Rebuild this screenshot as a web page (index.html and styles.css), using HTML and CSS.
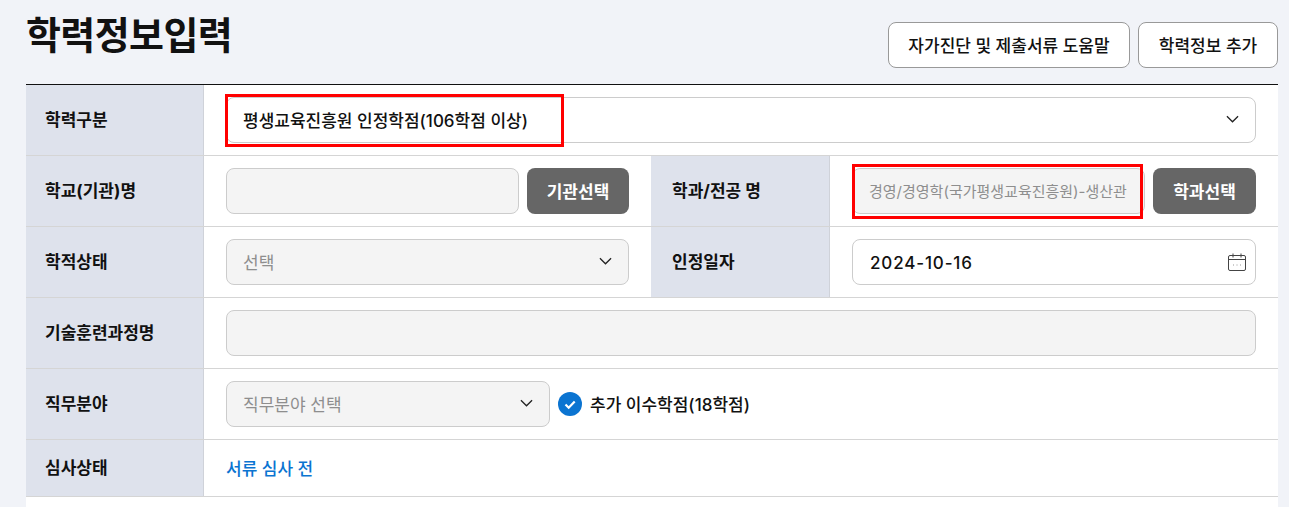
FILE: index.html
```html
<!DOCTYPE html>
<html lang="ko">
<head>
    <meta charset="UTF-8">
    <meta name="viewport" content="width=device-width, initial-scale=1.0">
    <title>학력정보입력</title>
    <link rel="stylesheet" href="styles.css">
</head>
<body>
<div class="container">
    <div class="top">
        <h1>학력정보입력</h1>
        <div class="top-buttons">
            <button class="btn-line help">자가진단 및 제출서류 도움말</button>
            <button class="btn-line add">학력정보 추가</button>
        </div>
    </div>

    <div class="form">
        <div class="row">
            <div class="label">학력구분</div>
            <div class="cell">
                <div class="field white grow mark-wrap">
                    <span class="value">평생교육진흥원 인정학점(106학점 이상)</span>
                    <svg class="chev" viewBox="0 0 14 8"><path d="M1 1l6 6 6-6"/></svg>
                    <span class="mark mark-a"></span>
                </div>
            </div>
        </div>

        <div class="row">
            <div class="label">학교(기관)명</div>
            <div class="cell half">
                <div class="field grey grow"></div>
                <button class="btn-dark school-btn">기관선택</button>
            </div>
            <div class="label label-r">학과/전공 명</div>
            <div class="cell half-r">
                <div class="field grey grow mark-wrap">
                    <span class="placeholder small">경영/경영학(국가평생교육진흥원)-생산관</span>
                    <span class="mark mark-b"></span>
                </div>
                <button class="btn-dark">학과선택</button>
            </div>
        </div>

        <div class="row">
            <div class="label">학적상태</div>
            <div class="cell half">
                <div class="field grey grow">
                    <span class="placeholder">선택</span>
                    <svg class="chev" viewBox="0 0 14 8"><path d="M1 1l6 6 6-6"/></svg>
                </div>
            </div>
            <div class="label label-r">인정일자</div>
            <div class="cell half-r">
                <div class="field white grow date-field">
                    <span class="value date">2024-10-16</span>
                    <svg class="cal" viewBox="0 0 18 18">
                        <rect x="0.5" y="2.5" width="17" height="15" rx="1.5"/>
                        <path d="M0.5 6.5h17M5 0.5v4M13 0.5v4"/>
                        <path class="cal-dots" d="M5 12h1M8.5 12h1M12 12h1"/>
                    </svg>
                </div>
            </div>
        </div>

        <div class="row">
            <div class="label">기술훈련과정명</div>
            <div class="cell">
                <div class="field grey grow"></div>
            </div>
        </div>

        <div class="row">
            <div class="label">직무분야</div>
            <div class="cell">
                <div class="field grey job">
                    <span class="placeholder">직무분야 선택</span>
                    <svg class="chev" viewBox="0 0 14 8"><path d="M1 1l6 6 6-6"/></svg>
                </div>
                <label class="check">
                    <svg class="check-icon" viewBox="0 0 24 24">
                        <circle cx="12" cy="12" r="12"/>
                        <path d="M7.5 12.5l3.2 3.2 6-6.2"/>
                    </svg>
                    추가 이수학점(18학점)
                </label>
            </div>
        </div>

        <div class="row last">
            <div class="label">심사상태</div>
            <div class="cell">
                <span class="status">서류 심사 전</span>
            </div>
        </div>
    </div>
    <div class="rest"></div>
</div>
</body>
</html>
```

FILE: styles.css
```css
html, body { margin: 0; padding: 0; }
body { background: #f1f3f8; font-family: Inter, "Noto Sans CJK KR", sans-serif; color: #111; }
.container { margin-left: 26px; width: 1252px; }

.top { display: flex; justify-content: space-between; height: 84px; }
h1 { margin: 10px 0 0; font-size: 38px; line-height: 50px; font-weight: 700; letter-spacing: -0.6px; color: #111; }
.top-buttons { display: flex; gap: 8px; padding-top: 22px; }
.btn-line { height: 46px; background: #fff; border: 1px solid #999; border-radius: 8px; font: 500 17px Inter, "Noto Sans CJK KR", sans-serif; color: #111; padding: 0 0 2px; }
.help { width: 242px; }
.add { width: 140px; }

.form { background: #fff; border-top: 1px solid #111; }
.row { display: flex; height: 70px; border-bottom: 1px solid #d5d5d5; }
.row.last { height: 56px; }
.label { flex: none; width: 158px; padding: 0 0 3px 19px; background: #dee2ec; border-right: 1px solid #cfd2d9; display: flex; align-items: center; font-size: 17px; font-weight: 700; box-sizing: content-box; height: 67px; }
.row.last .label { height: 53px; }
.label-r { width: 157px; padding-left: 21px; }
.cell { flex: 1; display: flex; align-items: center; gap: 8px; padding: 0 22px; min-width: 0; }
.cell.half { flex: none; width: 403px; }
.cell.half-r { flex: 1; }

.field { box-sizing: border-box; height: 46px; border: 1px solid #ccc; border-radius: 8px; display: flex; align-items: center; justify-content: space-between; padding: 0 16px 2px; font-size: 17px; min-width: 0; }
.grow { flex: 1; }
.white { background: #fff; }
.grey { background: #f4f4f4; }
.job { width: 324px; flex: none; }
.value { font-weight: 500; color: #111; }
.date { letter-spacing: 0.85px; }
.date-field { padding: 2px 9px 0 17px; }
.placeholder { color: #8e8e8e; white-space: nowrap; }
.small { font-size: 15px; }

.chev { width: 13px; height: 8px; fill: none; stroke: #222; stroke-width: 1.4; }
.cal { width: 18px; height: 18px; margin-top: -2px; fill: none; stroke: #444; stroke-width: 1; }
.cal .cal-dots { stroke: #999; }

.btn-dark { flex: none; height: 46px; width: 103px; background: #666; color: #fff; border: 0; border-radius: 8px; font: 700 17px Inter, "Noto Sans CJK KR", sans-serif; padding: 0 0 2px; }
.school-btn { width: 102px; }

.check { display: flex; align-items: center; gap: 8px; font-size: 17px; font-weight: 500; padding-bottom: 2px; }
.check-icon { width: 24px; height: 24px; margin-top: 2px; }
.check-icon circle { fill: #0b74d1; }
.check-icon path { fill: none; stroke: #fff; stroke-width: 2.2; }

.status { color: #0b74d1; font-size: 17px; font-weight: 500; padding-bottom: 2px; }

.mark-wrap { position: relative; }
.mark { position: absolute; box-sizing: border-box; border: 3px solid #f00; }
.mark-a { left: -2px; top: -4px; width: 339px; height: 53px; }
.mark-b { left: -1px; top: -5px; width: 291px; height: 55px; }

.rest { height: 10px; background: #fff; }
```
